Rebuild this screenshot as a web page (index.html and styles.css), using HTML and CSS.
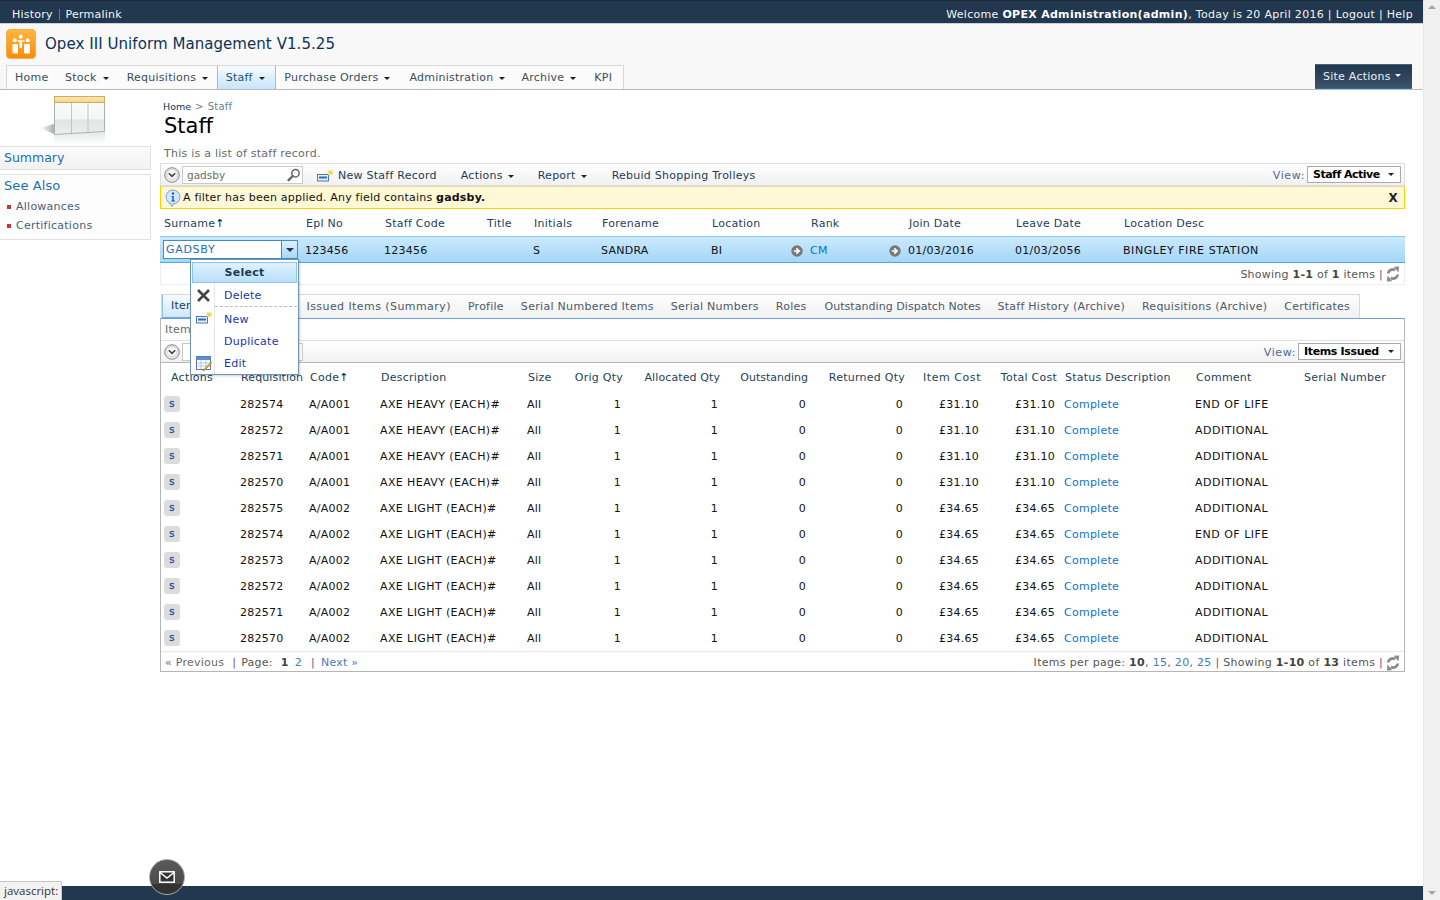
FILE: index.html
```html
<!DOCTYPE html>
<html lang="en">
<head>
<meta charset="utf-8">
<title>Staff</title>
<link rel="stylesheet" href="styles.css">
</head>
<body>
<svg class="defs" width="0" height="0" aria-hidden="true">
  <symbol id="i-down" viewBox="0 0 16 16"><circle cx="8" cy="8" r="7.3" fill="#e8e8e8" stroke="#8a8a8a"/><circle cx="8" cy="7.5" r="5.2" fill="#f8f8f8" stroke="#c4c4c4" stroke-width=".6"/><path d="M4.8 6.2 8 9.4l3.2-3.2" fill="none" stroke="#444" stroke-width="1.6"/></symbol>
  <symbol id="i-search" viewBox="0 0 14 14"><circle cx="8.5" cy="5.2" r="3.7" fill="#fff" stroke="#666" stroke-width="1.5"/><path d="M5.8 8 1.6 12.2" stroke="#666" stroke-width="2.4" stroke-linecap="round"/></symbol>
  <symbol id="i-new" viewBox="0 0 16 12"><rect x=".5" y="4.500" width="11" height="6.500" fill="#e8f0fb" stroke="#4a7ab0"/><rect x="2" y="6.500" width="8" height="2" fill="#2f6fc0"/><path d="M11 .5h4.500v4.500H11z" fill="#fff0a0"/><path d="M13.200 0v5.500M10.500 2.700H16M11 .5l4.500 4.500M15.500 .5 11 5" stroke="#e8b820" stroke-width=".8" stroke-dasharray="1 .6"/></symbol>
  <symbol id="i-refresh" viewBox="0 0 14 16"><path d="M2.200 7.500C2.400 4.500 5.800 2.400 9.300 4" fill="none" stroke="#8c8c8c" stroke-width="2.800"/><path d="M7.800.8 13.200.6 12.400 6.600Z" fill="#8c8c8c"/><path d="M11.800 8.500C11.600 11.500 8.200 13.600 4.700 12" fill="none" stroke="#8c8c8c" stroke-width="2.800"/><path d="M6.200 15.200.8 15.400 1.600 9.400Z" fill="#8c8c8c"/></symbol>
  <symbol id="i-go" viewBox="0 0 12 12"><circle cx="6" cy="6" r="5.700" fill="#777"/><path d="M2.800 6h4M5.300 3.400 8.200 6 5.300 8.600" fill="none" stroke="#fff" stroke-width="1.700"/></symbol>
</svg>

<div class="window">
  <div class="page">
    <header class="topbar">
      <div class="topbar-left"><a>History</a><span class="sep"></span><a>Permalink</a></div>
      <div class="topbar-right">Welcome <b>OPEX Administration(admin)</b>, Today is 20 April 2016 | Logout | Help</div>
    </header>

    <div class="masthead">
      <div class="brand">
        <svg class="logo" width="30" height="30" viewBox="0 0 30 30">
          <defs><linearGradient id="lg" x1="0" y1="0" x2="0" y2="1"><stop offset="0" stop-color="#ffb640"/><stop offset="1" stop-color="#fb8a08"/></linearGradient></defs>
          <rect x=".5" y=".5" width="29" height="29" rx="3.500" fill="url(#lg)" stroke="#f4b050"/>
          <circle cx="14.700" cy="7.700" r="2" fill="#fff"/><circle cx="8.700" cy="11.300" r="2" fill="#fff"/><circle cx="21.700" cy="11.300" r="2" fill="#fff"/>
          <rect x="6.500" y="15" width="5.500" height="9.500" rx="1" fill="#fff"/><rect x="18" y="15" width="6" height="9.500" rx="1" fill="#fff"/><rect x="13.500" y="11" width="2.500" height="8" fill="#fff"/><path d="M11.500 12h7" stroke="#fff" stroke-width="1.300"/>
        </svg>
        <span class="brand-name">Opex III Uniform Management V1.5.25</span>
      </div>
      <div class="navrow">
        <nav class="nav">
          <a class="nav-item">Home</a>
          <a class="nav-item">Stock<i class="caret"></i></a>
          <a class="nav-item">Requisitions<i class="caret"></i></a>
          <a class="nav-item active">Staff<i class="caret"></i></a>
          <a class="nav-item">Purchase Orders<i class="caret"></i></a>
          <a class="nav-item">Administration<i class="caret"></i></a>
          <a class="nav-item">Archive<i class="caret"></i></a>
          <a class="nav-item">KPI</a>
        </nav>
        <a class="site-actions">Site Actions<i class="caret white"></i></a>
      </div>
    </div>

    <div class="body-row">
      <aside class="sidebar">
        <svg class="side-art" width="66" height="50" viewBox="0 0 66 50">
          <defs>
            <linearGradient id="ga" x1="0" y1="0" x2="0" y2="1"><stop offset="0" stop-color="#fbe6a8"/><stop offset="1" stop-color="#f3d78c"/></linearGradient>
            <linearGradient id="gb" x1="0" y1="0" x2="0" y2="1"><stop offset="0" stop-color="#fafbfa"/><stop offset=".55" stop-color="#f4f5f5"/><stop offset=".6" stop-color="#e2e4e6"/><stop offset="1" stop-color="#eceeee"/></linearGradient>
            <linearGradient id="gs" x1="0" y1="0" x2="1" y2="0"><stop offset="0" stop-color="#fff"/><stop offset="1" stop-color="#b0b0b0"/></linearGradient>
            <linearGradient id="gr" x1="0" y1="0" x2="0" y2="1"><stop offset="0" stop-color="#e4e8e6"/><stop offset="1" stop-color="#fff"/></linearGradient>
          </defs>
          <path d="M0 33 14 29v10z" fill="url(#gs)"/>
          <path d="M14 40 65 37v12H14z" fill="url(#gr)"/>
          <path d="M14.500 4h50v32.500l-50 3z" fill="url(#gb)" stroke="#a5b3ac"/>
          <rect x="14.500" y="1.500" width="50" height="6" fill="url(#ga)" stroke="#c9ad66"/>
          <path d="M31.500 8v30M48 8v29" stroke="#c0c7c3"/>
        </svg>
        <div class="side-box summary"><a>Summary</a></div>
        <div class="side-box seealso">
          <a class="side-head">See Also</a>
          <ul class="side-list">
            <li>Allowances</li>
            <li>Certifications</li>
          </ul>
        </div>
      </aside>

      <main class="main">
        <div class="crumbs"><a>Home</a><span class="crumb-sep">&gt;</span><span>Staff</span></div>
        <h1 class="title">Staff</h1>
        <p class="intro">This is a list of staff record.</p>

        <div class="toolbar">
          <svg class="tool-down" width="16" height="16"><use href="#i-down"/></svg>
          <div class="search"><span>gadsby</span><svg width="14" height="14"><use href="#i-search"/></svg></div>
          <div class="tool-actions">
            <a class="tool-link"><svg width="16" height="12"><use href="#i-new"/></svg>New Staff Record</a>
            <a class="tool-link">Actions<i class="caret"></i></a>
            <a class="tool-link">Report<i class="caret"></i></a>
            <a class="tool-link">Rebuid Shopping Trolleys</a>
          </div>
          <div class="view"><span>View:</span><div class="view-select">Staff Active<i class="caret"></i></div></div>
        </div>

        <div class="filterbar">
          <svg width="18" height="18" viewBox="0 0 18 18"><circle cx="9" cy="8" r="7" fill="#d4e6fa" stroke="#7ba4d6"/><path d="M6 14l2 3.500 2-3" fill="#d4e6fa" stroke="#7ba4d6"/><circle cx="9" cy="4.500" r="1.200" fill="#1d5ab0"/><path d="M7.500 7h2.300v4.500h1.200v1H7.300v-1h1V8h-.8z" fill="#1d5ab0"/></svg>
          <span class="filter-text">A filter has been applied. Any field contains <b>gadsby.</b></span>
          <span class="filter-close">X</span>
        </div>

        <div class="staff-grid staff-head">
          <span>Surname<span class="sort">↑</span></span><span>Epl No</span><span>Staff Code</span><span>Title</span><span>Initials</span><span>Forename</span><span>Location</span><span>Rank</span><span>Join Date</span><span>Leave Date</span><span>Location Desc</span>
        </div>
        <div class="staff-grid staff-row">
          <div class="picker"><span class="picker-text">GADSBY</span><span class="picker-btn"><i class="caret"></i></span></div>
          <span>123456</span><span>123456</span><span></span><span>S</span><span>SANDRA</span><span>BI</span>
          <span class="go-cell"><svg width="12" height="12"><use href="#i-go"/></svg><a class="link">CM</a></span>
          <span class="go-cell"><svg width="12" height="12"><use href="#i-go"/></svg>01/03/2016</span>
          <span>01/03/2056</span><span>BINGLEY FIRE STATION</span>
        </div>
        <div class="showing"><span>Showing <b>1-1</b> of <b>1</b> items <span class="bar">|</span></span><svg width="14" height="16"><use href="#i-refresh"/></svg></div>

        <div class="tabs">
          <a class="tab tab-active">Items Issued</a>
          <a class="tab">Issued Items (Summary)</a>
          <a class="tab">Profile</a>
          <a class="tab">Serial Numbered Items</a>
          <a class="tab">Serial Numbers</a>
          <a class="tab">Roles</a>
          <a class="tab">Outstanding Dispatch Notes</a>
          <a class="tab">Staff History (Archive)</a>
          <a class="tab">Requisitions (Archive)</a>
          <a class="tab">Certificates</a>
        </div>

        <section class="panel">
          <div class="panel-intro">Items Issued</div>
          <div class="toolbar inner">
            <svg class="tool-down" width="16" height="16"><use href="#i-down"/></svg>
            <div class="search"></div>
            <div class="tool-actions"></div>
            <div class="view"><span>View:</span><div class="view-select wide">Items Issued<i class="caret"></i></div></div>
          </div>

          <div class="item-grid item-head">
            <span class="h-actions">Actions</span><span>Requisition</span><span>Code<span class="sort">↑</span></span><span>Description</span><span>Size</span><span class="r">Orig Qty</span><span class="r">Allocated Qty</span><span class="r">Outstanding</span><span class="r">Returned Qty</span><span class="r">Item Cost</span><span class="r">Total Cost</span><span class="h-status">Status Description</span><span>Comment</span><span>Serial Number</span>
          </div>

          <div class="item-grid item-row"><span><i class="s-btn">s</i></span><span>282574</span><span>A/A001</span><span>AXE HEAVY (EACH)#</span><span>All</span><span class="r">1</span><span class="r">1</span><span class="r">0</span><span class="r">0</span><span class="r">£31.10</span><span class="r">£31.10</span><a class="link status">Complete</a><span>END OF LIFE</span><span></span></div>
          <div class="item-grid item-row"><span><i class="s-btn">s</i></span><span>282572</span><span>A/A001</span><span>AXE HEAVY (EACH)#</span><span>All</span><span class="r">1</span><span class="r">1</span><span class="r">0</span><span class="r">0</span><span class="r">£31.10</span><span class="r">£31.10</span><a class="link status">Complete</a><span>ADDITIONAL</span><span></span></div>
          <div class="item-grid item-row"><span><i class="s-btn">s</i></span><span>282571</span><span>A/A001</span><span>AXE HEAVY (EACH)#</span><span>All</span><span class="r">1</span><span class="r">1</span><span class="r">0</span><span class="r">0</span><span class="r">£31.10</span><span class="r">£31.10</span><a class="link status">Complete</a><span>ADDITIONAL</span><span></span></div>
          <div class="item-grid item-row"><span><i class="s-btn">s</i></span><span>282570</span><span>A/A001</span><span>AXE HEAVY (EACH)#</span><span>All</span><span class="r">1</span><span class="r">1</span><span class="r">0</span><span class="r">0</span><span class="r">£31.10</span><span class="r">£31.10</span><a class="link status">Complete</a><span>ADDITIONAL</span><span></span></div>
          <div class="item-grid item-row"><span><i class="s-btn">s</i></span><span>282575</span><span>A/A002</span><span>AXE LIGHT (EACH)#</span><span>All</span><span class="r">1</span><span class="r">1</span><span class="r">0</span><span class="r">0</span><span class="r">£34.65</span><span class="r">£34.65</span><a class="link status">Complete</a><span>ADDITIONAL</span><span></span></div>
          <div class="item-grid item-row"><span><i class="s-btn">s</i></span><span>282574</span><span>A/A002</span><span>AXE LIGHT (EACH)#</span><span>All</span><span class="r">1</span><span class="r">1</span><span class="r">0</span><span class="r">0</span><span class="r">£34.65</span><span class="r">£34.65</span><a class="link status">Complete</a><span>END OF LIFE</span><span></span></div>
          <div class="item-grid item-row"><span><i class="s-btn">s</i></span><span>282573</span><span>A/A002</span><span>AXE LIGHT (EACH)#</span><span>All</span><span class="r">1</span><span class="r">1</span><span class="r">0</span><span class="r">0</span><span class="r">£34.65</span><span class="r">£34.65</span><a class="link status">Complete</a><span>ADDITIONAL</span><span></span></div>
          <div class="item-grid item-row"><span><i class="s-btn">s</i></span><span>282572</span><span>A/A002</span><span>AXE LIGHT (EACH)#</span><span>All</span><span class="r">1</span><span class="r">1</span><span class="r">0</span><span class="r">0</span><span class="r">£34.65</span><span class="r">£34.65</span><a class="link status">Complete</a><span>ADDITIONAL</span><span></span></div>
          <div class="item-grid item-row"><span><i class="s-btn">s</i></span><span>282571</span><span>A/A002</span><span>AXE LIGHT (EACH)#</span><span>All</span><span class="r">1</span><span class="r">1</span><span class="r">0</span><span class="r">0</span><span class="r">£34.65</span><span class="r">£34.65</span><a class="link status">Complete</a><span>ADDITIONAL</span><span></span></div>
          <div class="item-grid item-row"><span><i class="s-btn">s</i></span><span>282570</span><span>A/A002</span><span>AXE LIGHT (EACH)#</span><span>All</span><span class="r">1</span><span class="r">1</span><span class="r">0</span><span class="r">0</span><span class="r">£34.65</span><span class="r">£34.65</span><a class="link status">Complete</a><span>ADDITIONAL</span><span></span></div>

          <div class="pager">
            <div class="pager-left"><span class="muted">« Previous</span><span class="bar">|</span><span>Page:</span><b class="cur">1</b><a class="plink two">2</a><span class="bar">|</span><a class="plink">Next »</a></div>
            <div class="pager-right"><span>Items per page: <b>10</b>, <a class="plink">15</a>, <a class="plink">20</a>, <a class="plink">25</a> <span class="bar">|</span> Showing <b>1-10</b> of <b>13</b> items <span class="bar">|</span></span><svg width="14" height="16"><use href="#i-refresh"/></svg></div>
          </div>
        </section>

        <div class="popup">
          <div class="popup-select">Select</div>
          <div class="popup-item"><svg class="popup-icon" width="15" height="15" viewBox="0 0 15 15"><path d="M2 2l11 11M13 2 2 13" stroke="#444" stroke-width="2.600"/></svg><a>Delete</a></div>
          <div class="popup-sep"></div>
          <div class="popup-item"><svg class="popup-icon" width="16" height="12"><use href="#i-new"/></svg><a>New</a></div>
          <div class="popup-item"><a>Duplicate</a></div>
          <div class="popup-item"><svg class="popup-icon" width="16" height="15" viewBox="0 0 16 15"><rect x=".5" y=".5" width="14" height="13" fill="#fff" stroke="#5580b8"/><rect x="1" y="1" width="13" height="3" fill="#5f8fd0"/><path d="M1 7h13M1 10h13M5 4v9M10 4v9" stroke="#a8bcd8" stroke-width=".8"/><path d="M15 6 8 13l-1.500 2 2.300-.8 7-7z" fill="#e8b040" stroke="#8a6a20" stroke-width=".5"/></svg><a>Edit</a></div>
        </div>
      </main>
    </div>

    <footer class="footer"></footer>
  </div>

  <div class="scrollbar">
    <span class="arrow up"></span>
    <span class="arrow down"></span>
  </div>
</div>

<button class="mail" aria-label="Messages"><svg width="16" height="12" viewBox="0 0 16 12"><rect x=".8" y=".8" width="14.400" height="10.400" fill="#333" stroke="#fff" stroke-width="1.500"/><path d="M1 1.500 8 7l7-5.500" fill="none" stroke="#fff" stroke-width="1.500"/></svg></button>
<div class="statusbar">javascript:</div>
</body>
</html>
```

FILE: styles.css
```css
* { box-sizing: border-box; }
html, body { margin: 0; height: 900px; overflow: hidden; }
body { font-family: "DejaVu Sans", Verdana, sans-serif; font-size: 11px; line-height: 14px; letter-spacing: .25px; color: #111; background: #fff; }
a { color: inherit; text-decoration: none; }
.defs { position: absolute; }

.window { display: flex; height: 900px; }
.page { width: 1423px; display: flex; flex-direction: column; }

.topbar { height: 24px; flex: none; display: flex; justify-content: space-between; align-items: center; padding: 5px 10px 0 12px; background: #21384f; border-top: 1px solid #1a2b3c; border-bottom: 1px solid #c8d2dc; color: #f2f5f8; }
.topbar-left { display: flex; align-items: center; }
.sep { width: 1px; height: 11px; background: #66788a; margin: 0 5.500px 0 6px; }
.topbar-right { letter-spacing: .3px; }
.topbar-right b { color: #fff; }

.masthead { height: 66px; flex: none; display: flex; flex-direction: column; background: #f8f8f8; border-bottom: 1px solid #b9b9b9; }
.brand { height: 41px; display: flex; align-items: center; padding: 0 0 2px 6px; flex: none; }
.logo { margin-right: 9px; }
.brand-name { font-size: 15px; letter-spacing: .06px; color: #0b3359; }
.navrow { flex: 1; display: flex; justify-content: space-between; padding: 0 11px 0 6px; }
.nav { display: flex; border: 1px solid #d8d8d8; border-bottom: 0; background: #fbfbfb; }
.nav-item { display: flex; align-items: center; padding: 0 8.500px 0 8.500px; color: #3b4c60; white-space: nowrap; }
.nav-item:nth-child(1) { padding-left: 8px; padding-right: 8px; }
.nav-item:nth-child(2) { padding-right: 9.500px; }
.nav-item:nth-child(5) { padding-right: 10.500px; }
.nav-item:nth-child(6) { padding-right: 7.500px; }
.nav-item:nth-child(7) { padding-right: 9.500px; }
.nav-item:nth-child(8) { padding-right: 10.500px; }
.nav-item.active { background: linear-gradient(#f6fbff, #c7e5fb); border-left: 1px solid #8fc0e6; border-right: 1px solid #8fc0e6; color: #1f5078; padding: 0 10px 0 8px; }
.caret { display: inline-block; width: 0; height: 0; border: 3px solid transparent; border-top-color: #222; border-bottom: 0; margin-left: 6px; margin-top: 1px; }
.caret.white { border-top-color: #fff; margin-left: 4px; margin-top: -2px; }
.site-actions { display: flex; align-items: center; width: 97px; padding: 0 8px; color: #e8eef4; background: linear-gradient(#1f3750, #3f5269); border-top: 1px solid #4a6078; border-bottom: 1px solid #1c74b8; white-space: nowrap; margin-top: -1px; }

.body-row { flex: 1; display: flex; min-height: 0; }
.sidebar { width: 151px; flex: none; padding-top: 5px; display: flex; flex-direction: column; }
.side-art { margin-left: 40px; flex: none; }
.side-box { border: 1px solid #e2e2e2; border-left: 0; }
.summary { height: 24px; margin-top: 1px; padding: 2px 4px; font-size: 12.500px; letter-spacing: 0; line-height: 17px; color: #1d6fb0; background: linear-gradient(#fbfbfb, #f2f2f2); }
.seealso { height: 66px; margin-top: 4px; padding: 2px 4px; background: #fdfdfd; }
.side-head { font-size: 13px; letter-spacing: .1px; line-height: 17px; color: #1d6fb0; display: block; }
.side-list { list-style: none; margin: 3px 0 0; padding: 0 0 0 12px; color: #4a6078; }
.side-list li { position: relative; height: 19px; line-height: 19px; }
.side-list li::before { content: ""; position: absolute; left: -9px; top: 8px; width: 4px; height: 4px; background: #c0392b; }

.main { position: relative; width: 1245px; margin-left: 9px; flex: none; }
.crumbs { padding: 11px 0 0 3px; height: 22px; font-size: 10px; line-height: 12px; color: #6d7d8e; }
.crumbs a { color: #0b3359; font-size: 9.500px; letter-spacing: 0; }
.crumb-sep { margin: 0 4px; }
.title { margin: 0; padding-left: 4px; font-size: 21px; letter-spacing: 0; font-weight: 400; line-height: 28px; height: 28px; color: #000; }
.intro { margin: 7px 0 2px; padding-left: 4px; height: 14px; color: #6a6a6a; }

.toolbar { height: 23px; display: flex; align-items: center; padding: 0 3px; border: 1px solid #ddd; background: linear-gradient(#fff, #f1f1f1); }
.tool-down { flex: none; }
.search { width: 121px; height: 18px; margin-left: 2px; display: flex; align-items: center; justify-content: space-between; padding: 0 1px 0 4px; background: #fff; border: 1px solid #c9c9c9; color: #6c6c6c; font-size: 10.500px; letter-spacing: 0; flex: none; }
.tool-actions { flex: 1; display: flex; align-items: center; gap: 24px; padding: 2px 0 0 14px; }
.tool-link { display: flex; align-items: center; gap: 5px; color: #1f3a56; white-space: nowrap; }
.tool-link .caret { margin-left: 0; }
.tool-link:last-child { margin-left: 1px; }
.view { display: flex; align-items: center; gap: 2px; color: #4a6a95; }
.view > span { letter-spacing: .6px; padding-top: 2px; }
.view-select { width: 94px; height: 17px; display: flex; justify-content: space-between; align-items: center; padding: 0 6px 0 5px; border: 1px solid #aaa; background: #fff; color: #000; font-weight: 700; font-size: 11px; letter-spacing: -.5px; white-space: nowrap; }
.view-select .caret { margin: 0; }
.view-select.wide { width: 103px; letter-spacing: -.35px; }

.filterbar { height: 23px; display: flex; align-items: center; padding: 0 6px 0 3px; background: #fff8d6; border: 1px solid #fdd000; border-top: 1px solid #e8d9a0; }
.filter-text { flex: 1; margin-left: 1px; letter-spacing: .21px; color: #111; }
.filter-close { font-weight: 700; font-size: 12px; color: #222; }

.staff-grid { display: grid; grid-template-columns: 142px 79px 102px 47px 68px 110px 99px 98px 107px 108px 1fr; align-items: center; }
.staff-head { height: 27px; padding: 2px 0 0 4px; color: #243f5a; }
.sort { font-size: 11px; color: #111; }
.staff-row { height: 27px; padding: 2px 0 0 3px; background: linear-gradient(#cbe9fd, #a3d7f9); border-top: 1px solid #8fc8ee; border-bottom: 1px solid #5aa5d8; color: #111; }
.staff-row > :last-child { letter-spacing: .55px; }
.picker { display: flex; width: 135px; height: 19px; margin-top: -2px; background: #fff; border: 1px solid #3f8dc4; }
.picker-text { flex: 1; padding-left: 2px; line-height: 18px; letter-spacing: .7px; color: #1d6fb0; }
.picker-btn { width: 16px; border-left: 1px solid #3f8dc4; background: linear-gradient(#dbf0fe, #a8d8f8); display: flex; align-items: center; justify-content: center; }
.picker-btn .caret { border-width: 4px; border-bottom: 0; margin: 0; border-top-color: #1f3a56; }
.go-cell { display: flex; align-items: center; margin-left: -19px; gap: 7px; }
.link { color: #0a74c8; }
.showing { height: 22px; display: flex; align-items: center; justify-content: flex-end; gap: 3px; padding: 2px 4px 0 0; color: #555; border: 1px solid #eee; border-top: 0; }
.showing svg { margin-top: -2px; }
.showing b { color: #444; }
.bar { color: #7a4a8a; }

.tabs { display: flex; margin: 9px 0 0 1px; height: 24px; width: 1199px; border: 1px solid #d8d8d8; border-bottom: 0; background: linear-gradient(#fdfdfd, #f1f1f1); }
.tab { display: flex; align-items: center; padding: 0 8.500px; color: #4a5a6a; white-space: nowrap; }
.tab:nth-child(2) { letter-spacing: .43px; }
.tab:nth-child(4) { letter-spacing: .3px; }
.tab:nth-child(6) { padding-right: 9.500px; }
.tab:nth-child(7) { letter-spacing: .05px; }
.tab-active { width: 136px; padding: 0 8px; background: linear-gradient(#f6fbff, #cde8fb); border-left: 1px solid #8fc0e6; border-right: 1px solid #8fc0e6; border-bottom: 1px solid #6fa8dc; color: #1f3a56; }

.panel { height: 354px; border: 1px solid #b5b5b5; border-top: 1px solid #6f9fd8; display: flex; flex-direction: column; }
.panel-intro { height: 21px; flex: none; padding-left: 4px; line-height: 21px; color: #6a6a6a; }
.toolbar.inner { border-left: 0; border-right: 0; border-color: #e0e0e0 #e0e0e0 #b5b5b5; height: 23px; padding-left: 3px; padding-right: 3px; flex: none; }

.item-grid { display: grid; flex: none; grid-template-columns: 76px 69px 71px 147px 46px 50px 97px 88px 97px 76px 76px 138px 108px 1fr; align-items: center; padding-left: 3px; }
.item-grid > * { white-space: nowrap; min-width: 0; }
.item-head { height: 28px; padding-top: 1px; color: #243f5a; }
.item-head > span { padding-left: 1px; }
.item-head > .h-actions { padding-left: 7px; }
.item-head > .h-status { padding-left: 8px; }
.item-head > :nth-child(2) { letter-spacing: .12px; }
.item-head > :nth-child(7) { letter-spacing: .1px; }
.item-head > :nth-child(8) { letter-spacing: 0; }
.item-head > :nth-child(10) { letter-spacing: .55px; }
.r { text-align: right; }
.item-row { height: 26px; padding-top: 1px; color: #111; }
.item-row .r { padding-right: 2px; }
.item-row > :nth-child(4) { letter-spacing: .4px; }
.item-row > :nth-child(13) { letter-spacing: .5px; }
.status { padding-left: 7px; }
.s-btn { display: inline-flex; width: 16px; height: 16px; margin-top: -1px; vertical-align: middle; align-items: center; justify-content: center; background: #dcdcdc; border-radius: 3px; font-style: normal; font-size: 10px; font-weight: 400; -webkit-text-stroke: .3px #2a4a90; color: #2a4a90; }

.pager { flex: none; height: 21px; display: flex; justify-content: space-between; align-items: center; padding: 1px 4px 0; border-top: 1px solid #e8e8e8; color: #555; }
.pager-left { display: flex; gap: 8px; align-items: center; }
.pager-left .bar { margin-right: -3px; }
.pager-left .bar:nth-child(6) { margin-right: -2px; }
.muted { color: #6a6a6a; }
.cur { margin-right: -2px; }
.two { margin-right: 1px; }
.pager-right { display: flex; align-items: center; gap: 3px; letter-spacing: .3px; }
.plink { color: #4a7ab8; }
.pager b { color: #444; }

.popup { position: absolute; left: 30px; top: 169px; width: 109px; height: 116px; padding: 1px; background: #fff; border: 1px solid #6f95b5; box-shadow: 1px 1px 2px rgba(0,0,0,.2); background-image: linear-gradient(#e6e6e6, #e6e6e6); background-size: 1px 100%; background-position: 23px 0; background-repeat: no-repeat; }
.popup-select { height: 21px; margin: 1px 0; text-align: center; line-height: 19px; font-weight: 700; color: #1f3a56; background: linear-gradient(#e0f2fe, #b8e0fa); border: 1px solid #8cc6ee; }
.popup-item { position: relative; height: 22px; padding: 1px 0 0 32px; line-height: 22px; color: #1a36a8; }
.popup-icon { position: absolute; left: 4px; top: 4px; }
.popup-sep { height: 2px; margin-left: 23px; border-top: 1px dashed #bbb; }

.footer { height: 14px; flex: none; background: #21384f; }

.scrollbar { width: 17px; flex: none; position: relative; background: #f0f0f0; border-left: 1px solid #e8e8e8; }
.arrow { position: absolute; left: 4px; width: 0; height: 0; border: 4px solid transparent; }
.arrow.up { top: 5px; border-top: 0; border-bottom-color: #a6a6a6; }
.arrow.down { bottom: 5px; border-bottom: 0; border-top-color: #a6a6a6; }

.mail { position: fixed; left: 149px; top: 859px; width: 36px; height: 36px; padding: 0; display: flex; align-items: center; justify-content: center; border-radius: 50%; border: 1px solid #aaa; background: linear-gradient(#5a5a5a 0, #4a4a4a 70%, #333 71%, #333 100%); }
.statusbar { position: fixed; left: 0; top: 881px; width: 62px; height: 19px; padding-left: 4px; background: #f2f2f2; border: 1px solid #c8c8c8; border-left: 0; border-bottom: 0; color: #333; font-family: "Open Sans", sans-serif; font-size: 11.500px; letter-spacing: 0; line-height: 18px; }
```
